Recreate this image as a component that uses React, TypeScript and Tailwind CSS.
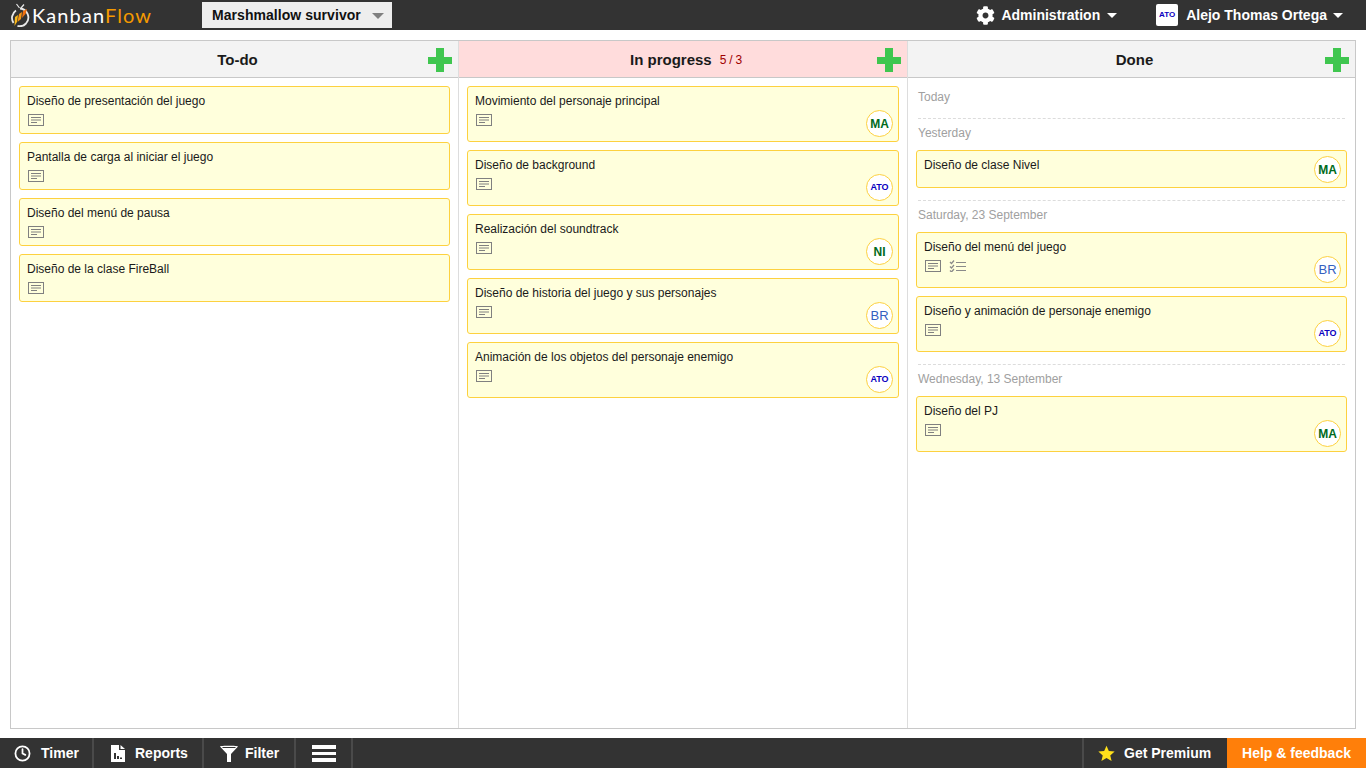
import { Clock } from 'lucide-react';
import { FaCog } from 'react-icons/fa';

type Task = { title: string; who?: string; checklist?: boolean };

const whoColor: Record<string, string> = {
    MA: 'text-[12px] font-bold text-[#006a20]',
    ATO: 'text-[9px] font-bold text-[#0a00c0]',
    NI: 'text-[12px] font-bold text-[#006a20]',
    BR: 'text-[13px] font-normal text-[#3560c0]',
};

const todo: Task[] = [
    { title: 'Diseño de presentación del juego' },
    { title: 'Pantalla de carga al iniciar el juego' },
    { title: 'Diseño del menú de pausa' },
    { title: 'Diseño de la clase FireBall' },
];

const progress: Task[] = [
    { title: 'Movimiento del personaje principal', who: 'MA' },
    { title: 'Diseño de background', who: 'ATO' },
    { title: 'Realización del soundtrack', who: 'NI' },
    { title: 'Diseño de historia del juego y sus personajes', who: 'BR' },
    { title: 'Animación de los objetos del personaje enemigo', who: 'ATO' },
];

function NoteIcon() {
    return (
        <svg width="16" height="12" viewBox="0 0 16 12" className="block">
            <rect x="0.5" y="0.5" width="15" height="11" fill="none" stroke="#808080" />
            <path d="M3 3.500h10M3 6h10M3 8.500h6" stroke="#808080" fill="none" />
        </svg>
    );
}

function ChecklistIcon() {
    return (
        <svg width="17" height="12" viewBox="0 0 17 12" className="block">
            <path d="M1 2l1.500 1.500L5 .5M1 6.500l1.500 1.500L5 5M1 10.500l1.500 1.500L5 9" stroke="#8a8a8a" strokeWidth="1.300" fill="none" />
            <path d="M7 2.500h10M7 6.500h10M7 10.500h10" stroke="#8a8a8a" fill="none" />
        </svg>
    );
}

function Caret({ color, size }: { color: string; size: string }) {
    return <span className={`block w-0 h-0 border-x-transparent ${size} ${color}`} />;
}

function Avatar({ who }: { who: string }) {
    return (
        <span className={`absolute right-[5px] bottom-[4px] w-[27px] h-[27px] rounded-full bg-white border border-[#fdd13f] flex items-center justify-center ${whoColor[who]}`}>
            {who}
        </span>
    );
}

function Card({ task, noNote }: { task: Task; noNote?: boolean }) {
    return (
        <div className={`relative rounded-[3px] border border-[#fdd13f] bg-[#ffffdc] px-[7px] pt-[7px] ${noNote ? 'h-[38px]' : task.who ? 'h-[56px]' : 'h-[48px]'}`}>
            <div className="text-[12px] leading-[14px] text-[#1a1a1a]">{task.title}</div>
            {!noNote && (
                <div className="flex items-center gap-[8px] mt-[6px] ml-[1px]">
                    <NoteIcon />
                    {task.checklist && <ChecklistIcon />}
                </div>
            )}
            {task.who && <Avatar who={task.who} />}
        </div>
    );
}

function ColumnHeader({ title, limit, red }: { title: string; limit?: string; red?: boolean }) {
    return (
        <div className={`relative h-[37px] shrink-0 border-b border-[#c8c8c8] flex items-center justify-center gap-2 pl-[6px] pt-[2px] ${red ? 'bg-[#ffdcdc]' : 'bg-[#f3f3f3]'}`}>
            <span className="text-[15px] font-bold text-[#1a1a1a]">{title}</span>
            {limit && <span className="text-[12px] tracking-[-0.2px] text-[#a00000]">{limit}</span>}
            <span className="absolute right-[6px] top-[16px] w-[24px] h-[7px] bg-[#3fc64f]" />
            <span className="absolute right-[14px] top-[7px] w-[8px] h-[24px] bg-[#3fc64f]" />
        </div>
    );
}

function DayLabel({ children }: { children: string }) {
    return <div className="text-[12px] leading-[14px] text-[#a0a0a0] px-[2px]">{children}</div>;
}

function Divider() {
    return <div className="border-t border-dashed border-[#dcdcdc] mx-[2px]" />;
}

function FooterItem({ icon, label, width }: { icon: React.ReactNode; label: string; width: string }) {
    return (
        <div className={`h-full flex items-center border-r-2 border-[#4a4a4a] ${width}`}>
            {icon}
            <span className="text-[14px] font-bold text-white">{label}</span>
        </div>
    );
}

export default function App() {
    return (
        <div className="h-screen flex flex-col bg-white overflow-hidden font-['Liberation_Sans',Arial,sans-serif]">

            {/* Top bar */}
            <header className="h-[30px] shrink-0 bg-[#333333] flex items-center">
                <div className="w-[202px] flex items-center pl-[10px]">
                    <svg width="21" height="24" viewBox="0 0 21 24" className="shrink-0">
                        <path d="M6.500 1l3 4M14 1.500l-3 3.500" stroke="#e8e8e8" strokeWidth="1.200" fill="none" />
                        <path d="M6 7.500A9 9 0 0 0 3.500 20M10 5.500a9 9 0 0 1 6 15 9 9 0 0 1-8.500 2.500" stroke="#e8e8e8" strokeWidth="1.800" fill="none" />
                        <path d="M5 14l3-2-1 7-2.500 4z" fill="#f9b81a" />
                        <path d="M9 11l3-2-1 7-3.500 3z" fill="#f79512" />
                        <path d="M13 8l4-2-1.500 5-3.500 4z" fill="#f0700f" />
                    </svg>
                    <span className="ml-[1px] text-[20px] leading-none font-['Lato',sans-serif] font-normal tracking-[1.1px] text-white">
                        Kanban<span className="text-[#f59a00]">Flow</span>
                    </span>
                </div>
                <div className="w-[190px] h-[26px] bg-[#eeeeee] flex items-center pl-[10px]">
                    <span className="text-[14px] font-bold tracking-[0.05px] text-[#111]">Marshmallow survivor</span>
                    <span className="ml-[11px] mt-[1px]"><Caret color="border-t-[#808080]" size="border-x-[6px] border-t-[6px]" /></span>
                </div>
                <div className="ml-auto flex items-center text-[14px] font-bold text-white">
                    <FaCog className="w-[19px] h-[19px] mr-[6px] text-white" />
                    <span>Administration</span>
                    <span className="ml-[7px] mr-[39px]"><Caret color="border-t-white" size="border-x-[5px] border-t-[5px]" /></span>
                    <span className="w-[22px] h-[22px] bg-white rounded-[2px] flex items-center justify-center text-[8px] font-bold text-[#0a00c0] mr-[8px]">ATO</span>
                    <span>Alejo Thomas Ortega</span>
                    <span className="ml-[6px] mr-[23px]"><Caret color="border-t-white" size="border-x-[5px] border-t-[5px]" /></span>
                </div>
            </header>

            {/* Board */}
            <main className="flex-1 min-h-0 pt-[10px] pb-[9px] px-[10px]">
                <div className="h-full border border-[#c8c8c8] grid grid-cols-[448px_449px_1fr]">

                    <section className="flex flex-col border-r border-[#dddddd]">
                        <ColumnHeader title="To-do" />
                        <div className="flex flex-col gap-[8px] pt-[8px] px-[8px]">
                            {todo.map((t) => <Card key={t.title} task={t} />)}
                        </div>
                    </section>

                    <section className="flex flex-col border-r border-[#dddddd]">
                        <ColumnHeader title="In progress" limit="5 / 3" red />
                        <div className="flex flex-col gap-[8px] pt-[8px] px-[8px]">
                            {progress.map((t) => <Card key={t.title} task={t} />)}
                        </div>
                    </section>

                    <section className="flex flex-col">
                        <ColumnHeader title="Done" />
                        <div className="flex flex-col px-[8px] pt-[12px]">
                            <DayLabel>Today</DayLabel>
                            <div className="mt-[14px]"><Divider /></div>
                            <div className="mt-[7px] mb-[10px]"><DayLabel>Yesterday</DayLabel></div>
                            <Card task={{ title: 'Diseño de clase Nivel', who: 'MA' }} noNote />
                            <div className="mt-[12px]"><Divider /></div>
                            <div className="mt-[7px] mb-[10px]"><DayLabel>Saturday, 23 September</DayLabel></div>
                            <div className="flex flex-col gap-[8px]">
                                <Card task={{ title: 'Diseño del menú del juego', who: 'BR', checklist: true }} />
                                <Card task={{ title: 'Diseño y animación de personaje enemigo', who: 'ATO' }} />
                            </div>
                            <div className="mt-[12px]"><Divider /></div>
                            <div className="mt-[7px] mb-[10px]"><DayLabel>Wednesday, 13 September</DayLabel></div>
                            <Card task={{ title: 'Diseño del PJ', who: 'MA' }} />
                        </div>
                    </section>
                </div>
            </main>

            {/* Bottom bar */}
            <footer className="h-[30px] shrink-0 bg-[#333333] flex items-center">
                <FooterItem
                    width="w-[94px] pl-[14px]"
                    label="Timer"
                    icon={<Clock className="w-[17px] h-[17px] text-white mr-[10px]" strokeWidth={2.500} />}
                />
                <FooterItem
                    width="w-[110px] pl-[17px]"
                    label="Reports"
                    icon={
                        <svg width="14" height="17" viewBox="0 0 14 17" className="mr-[10px]">
                            <path fillRule="evenodd" d="M0 0h8v5h6v12H0zM3 8v6h2V8zM6 11v3h2v-3zM9 12.500V14h2v-1.500zM9.500 0L14 4H9.500z" fill="#fff" />
                        </svg>
                    }
                />
                <FooterItem
                    width="w-[92px] pl-[16px]"
                    label="Filter"
                    icon={
                        <svg width="18" height="17" viewBox="0 0 18 17" className="mr-[7px]">
                            <path d="M0 1.500C0 .500 18 .500 18 1.500L11 9v8H7V9z" fill="#fff" />
                            <path d="M2.500 2.500h13" stroke="#333" fill="none" />
                        </svg>
                    }
                />
                <div className="w-[57px] h-full flex flex-col justify-center items-center gap-[3px] border-r-2 border-[#4a4a4a]">
                    <span className="w-[24px] h-[4px] bg-white" />
                    <span className="w-[24px] h-[3px] bg-white" />
                    <span className="w-[24px] h-[4px] bg-white" />
                </div>
                <div className="ml-auto h-full flex items-center border-l-2 border-[#4a4a4a] w-[145px] pl-[14px]">
                    <svg width="17" height="17" viewBox="0 0 24 24" className="mr-[9px]">
                        <path d="M12 1l3.300 7.500 8.200.800-6.200 5.400 1.900 8L12 18.400 4.800 22.700l1.900-8L.5 9.300l8.200-.8z" fill="#ffe01b" />
                    </svg>
                    <span className="text-[14px] font-bold text-white">Get Premium</span>
                </div>
                <div className="h-full w-[139px] bg-[#ff7f0a] flex items-center justify-center text-[14px] font-bold text-white">
                    Help &amp; feedback
                </div>
            </footer>
        </div>
    );
}
